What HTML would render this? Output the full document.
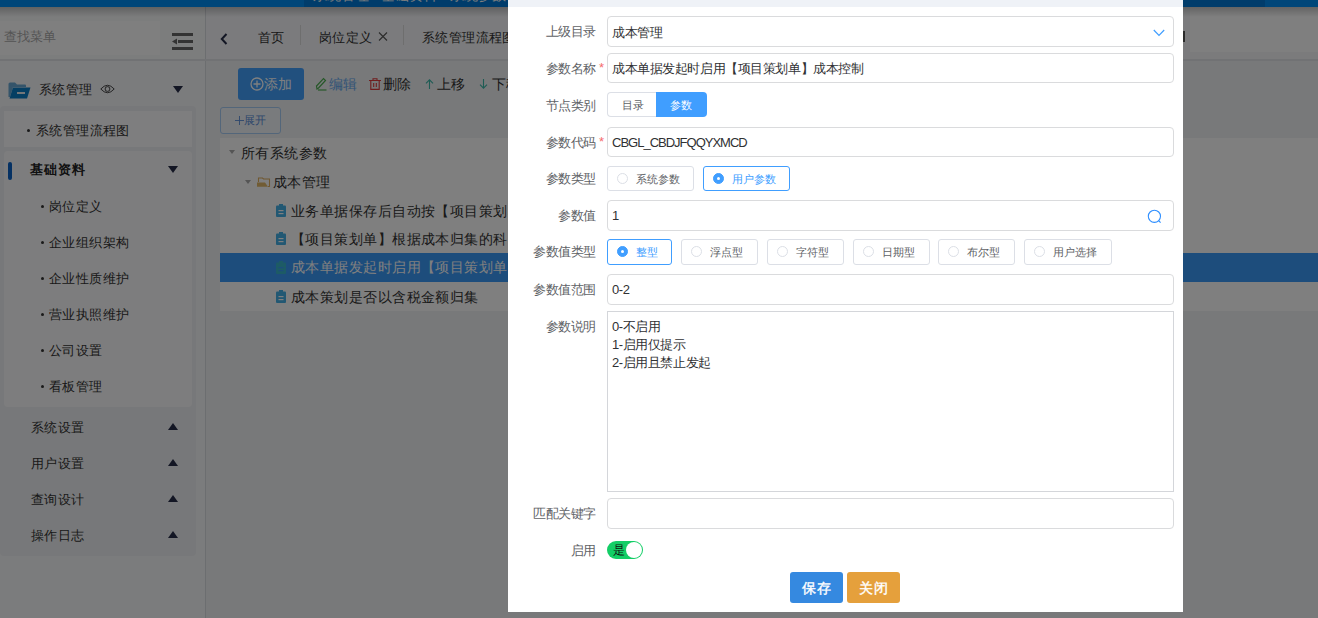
<!DOCTYPE html>
<html><head><meta charset="utf-8">
<style>
*{box-sizing:border-box;margin:0;padding:0}
html,body{width:1318px;height:618px;overflow:hidden}
body{position:relative;font-family:"Liberation Sans",sans-serif;background:#f0f2f5;color:#303133}
.a{position:absolute;white-space:nowrap}
svg{position:absolute;overflow:visible}
/* top bar */
#top{left:0;top:0;width:1318px;height:7px;background:#008cf2;overflow:hidden}
.dk{position:absolute;top:0;height:7px;background:#0078d6}
/* sidebar */
#side{left:0;top:7px;width:206px;height:611px;background:#f7f8fb}
.tx{margin-top:1px;font-size:13px;letter-spacing:.4px;line-height:16px;color:#333}
.tri-d{width:0;height:0;border-left:5.5px solid transparent;border-right:5.5px solid transparent;border-top:7px solid #262c48}
.tri-u{width:0;height:0;border-left:5.5px solid transparent;border-right:5.5px solid transparent;border-bottom:7px solid #262c48}
.dot{width:3px;height:3px;border-radius:2px;background:#333}
.tt{font-size:14px;letter-spacing:.45px;line-height:16px;color:#333}
/* overlay */
#ov{left:0;top:0;width:1318px;height:618px;background:rgba(0,0,0,.5)}
/* modal */
#modal{left:508px;top:0;width:675px;height:612px;background:#fff}
.lbl{font-size:13px;letter-spacing:-.45px;line-height:16px;color:#606266;right:587px}
.inp{left:99px;width:567px;height:30px;border:1px solid #dadbdd;border-radius:4px;background:#fff}
.itx{font-size:13px;letter-spacing:-.43px;line-height:16px;color:#303133}
.star{color:#f56c6c;font-size:13px;line-height:16px}
.rad{height:25px;border:1px solid #dcdfe6;border-radius:3px;background:#fff}
.rad.on{border-color:#409eff}
.rad .c{position:absolute;left:9px;top:6px;width:11px;height:11px;border:1px solid #dcdfe6;border-radius:50%;background:#fff}
.rad.on .c{background:#409eff;border-color:#409eff}
.rad.on .c:after{content:"";position:absolute;left:3px;top:3px;width:3px;height:3px;border-radius:50%;background:#fff}
.rad .t{position:absolute;left:28px;top:5px;font-size:11px;line-height:14px;color:#606266}
.rad.on .t{color:#409eff}
</style></head><body>

<!-- ============ APP ============ -->
<div id="top" class="a">
  <div class="dk" style="left:304px;width:204px"></div>
  <div class="dk" style="left:1183px;width:82px"></div>
  <div class="a" style="left:313px;top:-13px;font-size:14px;line-height:16px;color:#fff">系统管理 · 基础资料 · 系统参数设置</div>
</div>

<!-- sidebar -->
<div id="side" class="a"></div>
<div class="a" style="left:0;top:7px;width:205px;height:52px;background:#f9fafb"></div>
<div class="a" style="left:0;top:21px;width:160px;height:34px;background:#fff"></div>
<div class="a" style="left:4px;top:29px;font-size:13px;line-height:16px;color:#aaa">查找菜单</div>

<svg style="left:172px;top:33px" width="21" height="17" viewBox="0 0 21 17">
  <rect x="0" y="0" width="21" height="3" fill="#666"/>
  <rect x="6" y="7" width="15" height="3" fill="#666"/>
  <rect x="0" y="14" width="21" height="3" fill="#666"/>
  <path d="M0 8.5 L5 5.5 L5 11.5 Z" fill="#666"/>
</svg>

<div class="a" style="left:205px;top:7px;width:1px;height:611px;background:#d9dce1"></div>

<!-- 系统管理 header -->
<svg style="left:8px;top:82px" width="23" height="17" viewBox="0 0 23 17">
  <path d="M0.5 2 Q0.5 0.5 2 0.5 L7 0.5 L9 2.5 L17 2.5 Q18 2.5 18 3.5 L18 5 L5 5 L2 15 L0.5 15 Z" fill="#3a8fc7" opacity=".75"/>
  <path d="M5 5.5 L22.5 5.5 L19 16.5 L1.5 16.5 Z" fill="#0b7fc7"/>
  <rect x="9" y="10" width="8" height="2" fill="#e8eef3"/>
</svg>
<div class="a tx" style="left:39px;top:81px">系统管理</div>
<svg style="left:100px;top:84px" width="15" height="10" viewBox="0 0 15 10">
  <path d="M0.8 5 Q7.5 -2.5 14.2 5 Q7.5 12.5 0.8 5 Z" fill="none" stroke="#333" stroke-width="0.9"/>
  <circle cx="7.5" cy="5" r="2.4" fill="none" stroke="#333" stroke-width="0.9"/>
</svg>
<div class="a tri-d" style="left:173px;top:86px"></div>

<div class="a" style="left:0;top:106px;width:196px;height:450px;background:#eff1f4;border-radius:4px"></div>
<div class="a" style="left:4px;top:111px;width:188px;height:36px;background:#fdfdfe"></div>
<div class="a dot" style="left:27px;top:129px"></div>
<div class="a tx" style="left:36px;top:122px">系统管理流程图</div>

<div class="a" style="left:4px;top:151px;width:188px;height:256px;background:#fbfbfc;border-radius:4px"></div>
<div class="a" style="left:8px;top:162px;width:4px;height:18px;background:#0a63c6;border-radius:2px"></div>
<div class="a tx" style="left:30px;top:161px;font-weight:bold;color:#222;letter-spacing:.9px">基础资料</div>
<div class="a tri-d" style="left:168px;top:166px"></div>

<div class="a dot" style="left:41px;top:205px"></div><div class="a tx" style="left:49px;top:198px">岗位定义</div>
<div class="a dot" style="left:41px;top:241px"></div><div class="a tx" style="left:49px;top:234px">企业组织架构</div>
<div class="a dot" style="left:41px;top:277px"></div><div class="a tx" style="left:49px;top:270px">企业性质维护</div>
<div class="a dot" style="left:41px;top:313px"></div><div class="a tx" style="left:49px;top:306px">营业执照维护</div>
<div class="a dot" style="left:41px;top:349px"></div><div class="a tx" style="left:49px;top:342px">公司设置</div>
<div class="a dot" style="left:41px;top:385px"></div><div class="a tx" style="left:49px;top:378px">看板管理</div>

<div class="a tx" style="left:31px;top:419px">系统设置</div><div class="a tri-u" style="left:168px;top:423px"></div>
<div class="a tx" style="left:31px;top:455px">用户设置</div><div class="a tri-u" style="left:168px;top:459px"></div>
<div class="a tx" style="left:31px;top:491px">查询设计</div><div class="a tri-u" style="left:168px;top:495px"></div>
<div class="a tx" style="left:31px;top:527px">操作日志</div><div class="a tri-u" style="left:168px;top:531px"></div>

<!-- content: tabs -->
<div class="a" style="left:206px;top:7px;width:1112px;height:45px;background:#fff"></div>
<div class="a" style="left:206px;top:52px;width:1112px;height:7px;background:#f6f7f9"></div>
<div class="a" style="left:206px;top:7px;width:984px;height:52px;background:#f6f7fa"></div>
<div class="a" style="left:0;top:59px;width:1318px;height:2px;background:#e2e4e8"></div>
<svg style="left:220px;top:33px" width="8" height="12" viewBox="0 0 8 12">
  <path d="M6.5 1 L1.8 6 L6.5 11" fill="none" stroke="#262c48" stroke-width="2"/>
</svg>
<div class="a tx" style="left:258px;top:29px">首页</div>
<div class="a" style="left:300px;top:25px;width:1px;height:20px;background:#ddd"></div>
<div class="a tx" style="left:319px;top:29px">岗位定义</div>
<svg style="left:378px;top:32px" width="10" height="9" viewBox="0 0 10 9">
  <path d="M1 0.5 L9 8.5 M9 0.5 L1 8.5" stroke="#555" stroke-width="1.1"/>
</svg>
<div class="a" style="left:403px;top:25px;width:1px;height:20px;background:#ddd"></div>
<div class="a tx" style="left:422px;top:29px">系统管理流程图</div>

<!-- toolbar -->
<div class="a" style="left:238px;top:68px;width:66px;height:32px;background:#42a0fd;border-radius:3px"></div>
<svg style="left:250px;top:77px" width="14" height="14" viewBox="0 0 14 14">
  <circle cx="7" cy="7" r="6" fill="none" stroke="#fff" stroke-width="1.3"/>
  <path d="M7 3.5 V10.5 M3.5 7 H10.5" stroke="#fff" stroke-width="1.3"/>
</svg>
<div class="a tt" style="left:264px;top:76px;color:#fff">添加</div>

<svg style="left:315px;top:77px" width="12" height="14" viewBox="0 0 12 14">
  <path d="M2 12 L1.5 9 L8.5 1.5 L10.5 3.5 L3.5 11 Z" fill="none" stroke="#4caf50" stroke-width="1.2"/>
  <path d="M3 13 H11.5" stroke="#4caf50" stroke-width="1.2"/>
</svg>
<div class="a tt" style="left:329px;top:76px;color:#66a9ee">编辑</div>
<svg style="left:369px;top:78px" width="12" height="12" viewBox="0 0 12 12">
  <path d="M0 2.5 H12 M4 2.5 V0.8 H8 V2.5 M1.8 2.5 V11.4 H10.2 V2.5 M4.7 5 V9 M7.3 5 V9" fill="none" stroke="#e03c3c" stroke-width="1.1"/>
</svg>
<div class="a tt" style="left:383px;top:76px">删除</div>
<svg style="left:425px;top:79px" width="9" height="10" viewBox="0 0 9 10">
  <path d="M4.5 10 V0.8 M1 4.3 L4.5 0.8 L8 4.3" fill="none" stroke="#3cb8a8" stroke-width="1.1"/>
</svg>
<div class="a tt" style="left:437px;top:76px">上移</div>
<svg style="left:479px;top:79px" width="9" height="10" viewBox="0 0 9 10">
  <path d="M4.5 0 V9.2 M1 5.7 L4.5 9.2 L8 5.7" fill="none" stroke="#3cb8a8" stroke-width="1.1"/>
</svg>
<div class="a tt" style="left:492px;top:76px">下移</div>

<div class="a" style="left:220px;top:107px;width:61px;height:27px;border:1px solid #a6cdf5;border-radius:3px;background:#f3f6fb"></div>
<svg style="left:235px;top:116px" width="9" height="9" viewBox="0 0 9 9"><path d="M4.5 0 V9 M0 4.5 H9" stroke="#5b8fd8" stroke-width=".9"/></svg><div class="a" style="left:244px;top:113px;font-size:11px;line-height:14px;color:#5b8fd8">展开</div>

<!-- tree -->
<div class="a" style="left:220px;top:138px;width:1098px;height:173px;background:#fff"></div>
<div class="a" style="left:220px;top:253px;width:1098px;height:29px;background:#3a9af8"></div>
<div class="a tri-d" style="left:229px;top:150px;border-left-width:3px;border-right-width:3px;border-top-width:4px;border-top-color:#aaa"></div>
<div class="a tt" style="left:241px;top:145px">所有系统参数</div>
<div class="a tri-d" style="left:245px;top:180px;border-left-width:3px;border-right-width:3px;border-top-width:4px;border-top-color:#aaa"></div>
<svg style="left:257px;top:177px" width="13" height="10" viewBox="0 0 13 10">
  <path d="M1.5 5 V1 H5.5 L6.5 2 H12.5 V9.5 H11" fill="none" stroke="#e0b060" stroke-width="1.1"/>
  <path d="M0 5.5 H8 L11 9.8 H0 Z" fill="#e2b868"/>
</svg>
<div class="a tt" style="left:273px;top:174px">成本管理</div>

<svg style="left:276px;top:204px" width="10" height="13" viewBox="0 0 10 13"><rect x="0" y="1.5" width="10" height="11.5" rx="1" fill="#44b0e6"/><rect x="3" y="0" width="4" height="2.5" fill="#44b0e6"/><rect x="2.5" y="6" width="5" height="1.2" fill="#fff"/><rect x="2.5" y="9" width="5" height="1.2" fill="#fff"/></svg>
<div class="a tt" style="left:291px;top:203px">业务单据保存后自动按【项目策划单】成本控制</div>
<svg style="left:276px;top:232px" width="10" height="13" viewBox="0 0 10 13"><rect x="0" y="1.5" width="10" height="11.5" rx="1" fill="#44b0e6"/><rect x="3" y="0" width="4" height="2.5" fill="#44b0e6"/><rect x="2.5" y="6" width="5" height="1.2" fill="#fff"/><rect x="2.5" y="9" width="5" height="1.2" fill="#fff"/></svg>
<div class="a tt" style="left:291px;top:231px">【项目策划单】根据成本归集的科目</div>
<svg style="left:276px;top:261px" width="10" height="13" viewBox="0 0 10 13"><rect x="0" y="1.5" width="10" height="11.5" rx="1" fill="#3ab6cd"/><rect x="3" y="0" width="4" height="2.5" fill="#3ab6cd"/><rect x="2.5" y="6" width="5" height="1.2" fill="#3a9af8"/><rect x="2.5" y="9" width="5" height="1.2" fill="#3a9af8"/></svg>
<div class="a tt" style="left:291px;top:259px;color:#fff">成本单据发起时启用【项目策划单】成本控制</div>
<svg style="left:276px;top:290px" width="10" height="13" viewBox="0 0 10 13"><rect x="0" y="1.5" width="10" height="11.5" rx="1" fill="#44b0e6"/><rect x="3" y="0" width="4" height="2.5" fill="#44b0e6"/><rect x="2.5" y="6" width="5" height="1.2" fill="#fff"/><rect x="2.5" y="9" width="5" height="1.2" fill="#fff"/></svg>
<div class="a tt" style="left:291px;top:289px">成本策划是否以含税金额归集</div>

<div class="a" style="left:0;top:7px;width:1318px;height:10px;background:linear-gradient(rgba(0,0,0,.22),rgba(0,0,0,0))"></div>
<div class="a" style="left:1183px;top:31px;width:2px;height:11px;background:#555"></div>
<div id="ov" class="a"></div>

<!-- ============ MODAL ============ -->
<div id="modal" class="a">
  <div class="a" style="left:0;top:0;width:675px;height:7px;background:#eff2f7"></div>

  <!-- row 1 -->
  <div class="a lbl" style="top:24px">上级目录</div>
  <div class="a inp" style="top:16px;height:31px"></div>
  <div class="a itx" style="left:104px;top:25px">成本管理</div>
  <svg style="left:645px;top:29px" width="12" height="8" viewBox="0 0 12 8">
    <path d="M0.8 1 L6 6.5 L11.2 1" fill="none" stroke="#409eff" stroke-width="1.2"/>
  </svg>

  <!-- row 2 -->
  <div class="a lbl" style="top:61px">参数名称</div>
  <div class="a star" style="left:91px;top:60px">*</div>
  <div class="a inp" style="top:53px"></div>
  <div class="a itx" style="left:104px;top:61px">成本单据发起时启用【项目策划单】成本控制</div>

  <!-- row 3 -->
  <div class="a lbl" style="top:98px">节点类别</div>
  <div class="a" style="left:99px;top:92px;width:50px;height:25px;border:1px solid #dcdfe6;border-right:0;border-radius:4px 0 0 4px;background:#fff"></div>
  <div class="a" style="left:114px;top:98px;font-size:11px;line-height:14px;color:#606266">目录</div>
  <div class="a" style="left:148px;top:92px;width:51px;height:25px;background:#409eff;border-radius:0 4px 4px 0"></div>
  <div class="a" style="left:162px;top:98px;font-size:11px;line-height:14px;color:#fff">参数</div>

  <!-- row 4 -->
  <div class="a lbl" style="top:135px">参数代码</div>
  <div class="a star" style="left:91px;top:134px">*</div>
  <div class="a inp" style="top:127px"></div>
  <div class="a itx" style="left:104px;top:135px;letter-spacing:-1px">CBGL_CBDJFQQYXMCD</div>

  <!-- row 5 -->
  <div class="a lbl" style="top:171px">参数类型</div>
  <div class="a rad" style="left:99px;top:166px;width:87px"><div class="c"></div><div class="t">系统参数</div></div>
  <div class="a rad on" style="left:195px;top:166px;width:87px"><div class="c"></div><div class="t">用户参数</div></div>

  <!-- row 6 -->
  <div class="a lbl" style="top:208px">参数值</div>
  <div class="a inp" style="top:200px;height:31px"></div>
  <div class="a itx" style="left:104px;top:208px">1</div>
  <svg style="left:639px;top:209px" width="16" height="16" viewBox="0 0 16 16">
    <circle cx="7.4" cy="7.3" r="6.1" fill="none" stroke="#2f8fff" stroke-width="1.1"/>
    <path d="M11.6 11.6 L13.6 13.6" stroke="#2f8fff" stroke-width="1.1"/>
  </svg>

  <!-- row 7 -->
  <div class="a lbl" style="top:244px">参数值类型</div>
  <div class="a rad on" style="left:99px;top:239px;width:65px;height:26px"><div class="c"></div><div class="t">整型</div></div>
  <div class="a rad" style="left:173px;top:239px;height:26px;width:77px"><div class="c"></div><div class="t">浮点型</div></div>
  <div class="a rad" style="left:259px;top:239px;height:26px;width:77px"><div class="c"></div><div class="t">字符型</div></div>
  <div class="a rad" style="left:345px;top:239px;height:26px;width:77px"><div class="c"></div><div class="t">日期型</div></div>
  <div class="a rad" style="left:430px;top:239px;height:26px;width:77px"><div class="c"></div><div class="t">布尔型</div></div>
  <div class="a rad" style="left:516px;top:239px;height:26px;width:88px"><div class="c"></div><div class="t">用户选择</div></div>

  <!-- row 8 -->
  <div class="a lbl" style="top:282px">参数值范围</div>
  <div class="a inp" style="top:274px;height:31px"></div>
  <div class="a itx" style="left:104px;top:282px">0-2</div>

  <!-- row 9 -->
  <div class="a lbl" style="top:319px">参数说明</div>
  <div class="a" style="left:99px;top:311px;width:567px;height:181px;border:1px solid #d4d6da"></div>
  <div class="a itx" style="left:104px;top:318px;line-height:18px;white-space:pre">0-不启用
1-启用仅提示
2-启用且禁止发起</div>

  <!-- row 10 -->
  <div class="a lbl" style="top:506px">匹配关键字</div>
  <div class="a inp" style="top:498px;height:31px"></div>

  <!-- row 11 -->
  <div class="a lbl" style="top:543px">启用</div>
  <div class="a" style="left:99px;top:541px;width:36px;height:18px;background:#13ce66;border-radius:9px"></div>
  <div class="a" style="left:118px;top:542px;width:16px;height:16px;background:#fff;border-radius:50%"></div>
  <div class="a" style="left:105px;top:543px;font-size:12px;line-height:14px;color:#111">是</div>

  <!-- buttons -->
  <div class="a" style="left:282px;top:572px;width:53px;height:31px;background:#3589e0;border-radius:3px"></div>
  <div class="a" style="left:294px;top:580px;font-size:14px;line-height:16px;color:#fff;font-weight:normal;-webkit-text-stroke:.4px #fff;letter-spacing:1px">保存</div>
  <div class="a" style="left:339px;top:572px;width:53px;height:31px;background:#e5a03c;border-radius:3px"></div>
  <div class="a" style="left:351px;top:580px;font-size:14px;line-height:16px;color:#fff;font-weight:normal;-webkit-text-stroke:.4px #fff;letter-spacing:1px">关闭</div>
</div>

</body></html>
